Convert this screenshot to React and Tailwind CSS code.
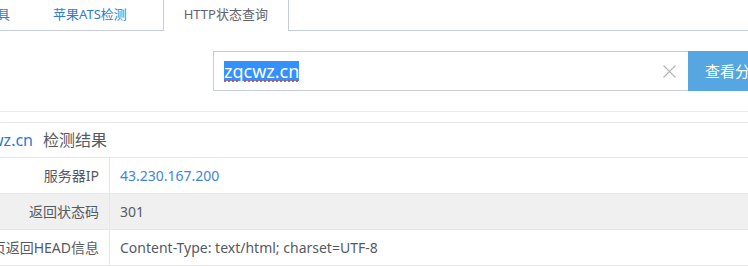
import React from "react";

const font = { fontFamily: '"Noto Sans", "Noto Sans CJK SC", sans-serif' };

function ClearIcon() {
  return (
    <svg width="13" height="13" viewBox="0 0 13 13" className="shrink-0">
      <path d="M0.5 0.5 L12.5 12.5 M12.5 0.5 L0.5 12.5" stroke="#b5b5b5" strokeWidth="1.1" fill="none" />
    </svg>
  );
}

export default function App() {
  const rows = [
    { label: "服务器IP", value: "43.230.167.200", blue: true, bg: "bg-white" },
    { label: "返回状态码", value: "301", blue: false, bg: "bg-[#f0f0f0]" },
    { label: "网页返回HEAD信息", value: "Content-Type: text/html; charset=UTF-8", blue: false, bg: "bg-white" },
  ];
  return (
    <div className="w-[748px] h-[266px] overflow-hidden bg-white" style={font}>
      {/* tabs */}
      <div className="flex items-start h-[31px] border-b border-[#c6ccda]">
        <div className="-ml-[42px] shrink-0 h-[30px] leading-[28px] text-[13px] text-[#2f7dd1] whitespace-nowrap">常用工具</div>
        <div className="ml-[43px] shrink-0 h-[30px] leading-[28px] text-[13px] text-[#2f7dd1] whitespace-nowrap">苹果ATS检测</div>
        <div className="ml-[36px] shrink-0 h-[31px] w-[126px] bg-white border-x border-[#c6ccda] leading-[28px] text-[13px] text-[#5f6570] text-center whitespace-nowrap">
          HTTP状态查询
        </div>
      </div>

      {/* search form */}
      <div className="pt-[20px] pb-[20px] pl-[213px] border-b border-[#ececec] flex">
        <div className="w-[475px] shrink-0 h-[40px] border border-r-0 border-[#c6ccda] flex items-center pl-[10px] pr-[12px]">
          <span className="text-[18px] leading-[20px] bg-[#3390ff] text-white underline decoration-dotted decoration-[#e04444] underline-offset-[3px]">
            zqcwz.cn
          </span>
          <div className="flex-1" />
          <ClearIcon />
        </div>
        <div className="h-[40px] w-[100px] shrink-0 bg-[#55a6e1] text-white text-[15px] leading-[40px] pl-[17px] whitespace-nowrap">
          查看分析
        </div>
      </div>

      {/* result */}
      <div className="mt-[10px] -ml-[40px] w-[788px] border-t border-[#e6e6e6]">
        <div className="h-[35px] border-b border-[#e6e6e6] flex items-center pl-[6px] text-[16px] whitespace-nowrap">
          <span className="text-[#2b7bd0]">zqcwz.cn</span>
          <span className="ml-[10px] text-[#555a62]">检测结果</span>
        </div>
        {rows.map((r) => (
          <div key={r.label} className={`flex h-[36px] border-b border-[#e6e6e6] ${r.bg}`}>
            <div className="w-[150px] shrink-0 border-r border-[#e6e6e6] flex items-center justify-end pr-[10px] text-[14px] text-[#555a62] whitespace-nowrap">
              {r.label}
            </div>
            <div className={`flex items-center pl-[10px] text-[14px] whitespace-nowrap ${r.blue ? "text-[#3d86e0]" : "text-[#555a62]"}`}>
              {r.value}
            </div>
          </div>
        ))}
      </div>
    </div>
  );
}
